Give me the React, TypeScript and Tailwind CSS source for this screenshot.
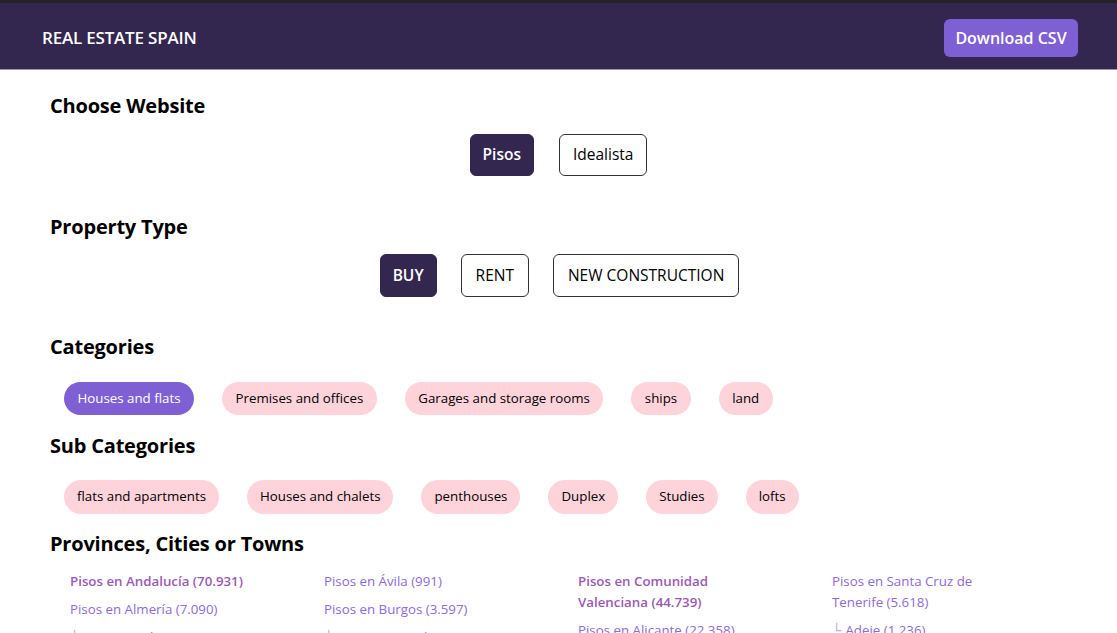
import { useState } from "react";

const websites = ["Pisos", "Idealista"];
const propertyTypes = ["BUY", "RENT", "NEW CONSTRUCTION"];
const categories = [
  "Houses and flats",
  "Premises and offices",
  "Garages and storage rooms",
  "ships",
  "land",
];
const subCategories = [
  "flats and apartments",
  "Houses and chalets",
  "penthouses",
  "Duplex",
  "Studies",
  "lofts",
];

interface Place {
  label: string;
  region?: boolean;
  child?: boolean;
}

// columns of the provinces list
const places: Place[][] = [
  [
    { label: "Pisos en Andalucía (70.931)", region: true },
    { label: "Pisos en Almería (7.090)" },
    { label: "Roquetas de Mar (1.234)", child: true },
  ],
  [
    { label: "Pisos en Ávila (991)" },
    { label: "Pisos en Burgos (3.597)" },
    { label: "Burgos Capital (1.147)", child: true },
  ],
  [
    { label: "Pisos en Comunidad Valenciana (44.739)", region: true },
    { label: "Pisos en Alicante (22.358)" },
    { label: "Alicante Capital (4.512)", child: true },
  ],
  [
    { label: "Pisos en Santa Cruz de Tenerife (5.618)" },
    { label: "Adeje (1.236)", child: true },
    { label: "Arona (1.420)", child: true },
  ],
];

const App: React.FC = () => {
  const [website, setWebsite] = useState("Pisos");
  const [propertyType, setPropertyType] = useState("BUY");
  const [category, setCategory] = useState("Houses and flats");
  const [subCategory, setSubCategory] = useState("");

  return (
    <div className="min-h-screen bg-white text-black font-['Open_Sans',sans-serif]">
      <div className="h-[3px] bg-[#232226]" />
      <header className="flex h-[67px] items-center justify-between border-b border-[#9d93b5] bg-[#33264f] pl-[42px] pr-[39px]">
        <h1 className="pt-[3px] text-[17px] font-semibold tracking-[-0.2px] text-white">REAL ESTATE SPAIN</h1>
        <button className="mt-[3px] h-[38px] w-[134px] rounded-md bg-[#7f5fd4] text-[16px] font-semibold text-white">
          Download CSV
        </button>
      </header>

      <main className="px-[50px]">
        {/* Website */}
        <h2 className="mt-[22px] text-[20px] font-bold leading-7 tracking-[-0.2px]">Choose Website</h2>
        <div className="mt-[14px] flex justify-center gap-[25px]">
          {websites.map((w) => (
            <button
              key={w}
              onClick={() => setWebsite(w)}
              className={
                website === w
                  ? "h-[42px] rounded-md border border-[#33264f] bg-[#33264f] px-[12px] text-[15.5px] font-semibold text-white"
                  : "h-[42px] rounded-md border border-[#333] bg-white px-[13px] text-[15.5px] text-black"
              }
            >
              {w}
            </button>
          ))}
        </div>

        {/* Property type */}
        <h2 className="mt-[37px] text-[20px] font-bold leading-7 tracking-[-0.2px]">Property Type</h2>
        <div className="mt-[13px] flex justify-center gap-[24px] pl-[2px]">
          {propertyTypes.map((p) => (
            <button
              key={p}
              onClick={() => setPropertyType(p)}
              className={
                propertyType === p
                  ? "h-[43px] rounded-md border border-[#33264f] bg-[#33264f] px-[12px] text-[15.5px] font-semibold text-white"
                  : "h-[43px] rounded-md border border-[#333] bg-white px-[14px] text-[15.5px] text-black"
              }
            >
              {p}
            </button>
          ))}
        </div>

        {/* Categories */}
        <h2 className="mt-[36px] text-[20px] font-bold leading-7 tracking-[-0.2px]">Categories</h2>
        <div className="mt-[21px] flex flex-wrap pl-[-1px]">
          {categories.map((c) => (
            <button
              key={c}
              onClick={() => setCategory(c)}
              className={
                category === c
                  ? "mx-[14px] h-[33px] rounded-full bg-[#7f5fd4] px-[13.5px] text-[13.3px] text-white"
                  : "mx-[14px] h-[33px] rounded-full bg-[#ffd3da] px-[13.5px] text-[13.3px] text-black"
              }
            >
              {c}
            </button>
          ))}
        </div>

        {/* Sub categories */}
        <h2 className="mt-[17px] text-[20px] font-bold leading-7 tracking-[-0.2px]">Sub Categories</h2>
        <div className="mt-[20px] flex flex-wrap">
          {subCategories.map((s) => (
            <button
              key={s}
              onClick={() => setSubCategory(s)}
              className={
                subCategory === s
                  ? "mx-[14px] h-[34px] rounded-full bg-[#7f5fd4] px-[13px] text-[13.3px] text-white"
                  : "mx-[14px] h-[34px] rounded-full bg-[#ffd3da] px-[13px] text-[13.3px] text-black"
              }
            >
              {s}
            </button>
          ))}
        </div>

        {/* Provinces */}
        <h2 className="mt-[16px] text-[20px] font-bold leading-7 tracking-[-0.2px]">Provinces, Cities or Towns</h2>
        <div className="mt-[13px] grid grid-cols-[repeat(4,254px)] pl-5">
          {places.map((col, i) => (
            <ul key={i}>
              {col.map((p) => (
                <li key={p.label} className="mb-[7px] max-w-[180px] text-[13.3px] leading-[21px]">
                  <a
                    href="#"
                    className={
                      p.region
                        ? "font-semibold text-[#9b59b6]"
                        : "text-[#8f6ad8]"
                    }
                  >
                    {p.child && <span className="mr-1 text-[#b3a8d6]">└</span>}
                    {p.label}
                  </a>
                </li>
              ))}
            </ul>
          ))}
        </div>
      </main>
    </div>
  );
};

export default App;
